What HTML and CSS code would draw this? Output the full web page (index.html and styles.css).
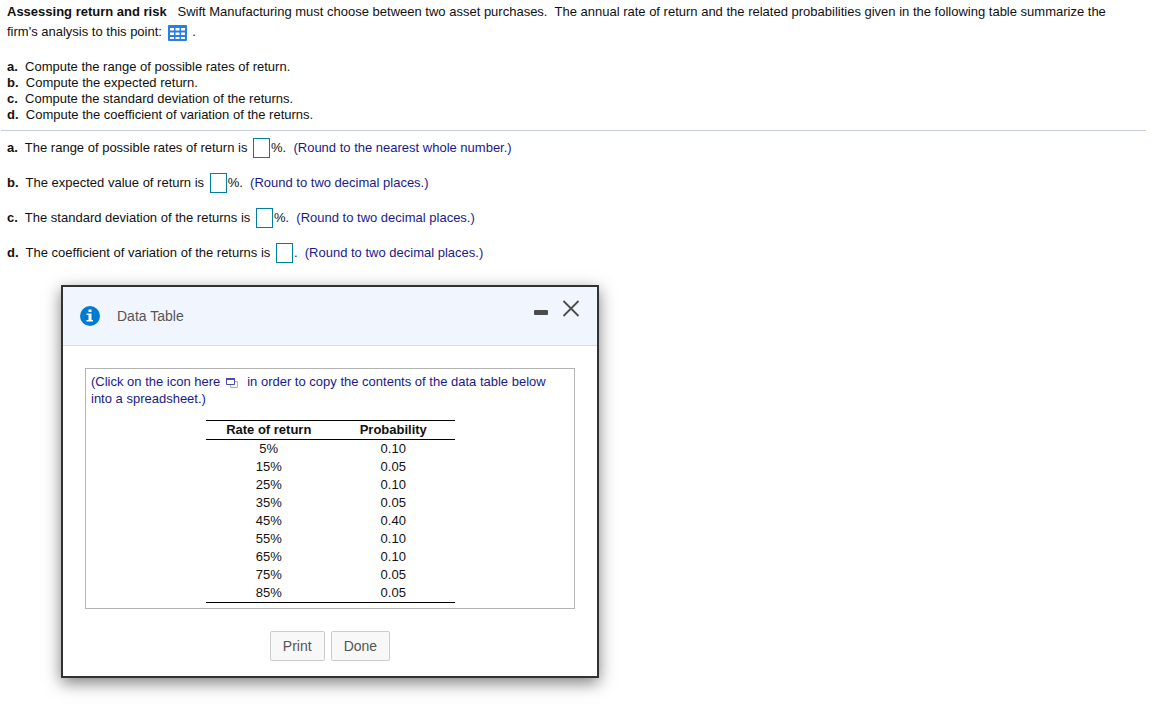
FILE: index.html
```html
<!DOCTYPE html>
<html lang="en">

<head>
    <meta charset="UTF-8">
    <meta name="viewport" content="width=device-width, initial-scale=1.0">
    <title>Assessing return and risk</title>
    <link rel="stylesheet" href="styles.css">
</head>

<body>
    <main class="exercise">
        <section class="question">
            <p class="intro"><b>Assessing return and risk</b> &nbsp; Swift Manufacturing must choose between two asset purchases.&nbsp; The annual rate of return and the related probabilities given in the following table summarize the firm's analysis to this point: <button class="table-btn" type="button" aria-label="Open data table"><svg width="19" height="16" viewBox="0 0 19 16">
                        <rect width="19" height="16" rx="1" fill="#2b7de0" />
                        <path fill="#fff" d="M2 3h4v2.500H2zM7.500 3h4v2.500h-4zM13 3h4v2.500h-4zM2 7.500h4v2.500H2zM7.500 7.500h4v2.500h-4zM13 7.500h4v2.500h-4zM2 12h4v2H2zM7.500 12h4v2h-4zM13 12h4v2h-4z" />
                    </svg></button> .</p>
            <ul class="parts">
                <li><b>a.</b>&nbsp; Compute the range of possible rates of return.</li>
                <li><b>b.</b>&nbsp; Compute the expected return.</li>
                <li><b>c.</b>&nbsp; Compute the standard deviation of the returns.</li>
                <li><b>d.</b>&nbsp; Compute the coefficient of variation of the returns.</li>
            </ul>
        </section>
        <form class="answers">
            <p><label for="range"><b>a.</b>&nbsp; The range of possible rates of return is</label> <input id="range" type="text">%.&nbsp; <span class="hint">(Round to the nearest whole number.)</span></p>
            <p><label for="expected"><b>b.</b>&nbsp; The expected value of return is</label> <input id="expected" type="text">%.&nbsp; <span class="hint">(Round to two decimal places.)</span></p>
            <p><label for="deviation"><b>c.</b>&nbsp; The standard deviation of the returns is</label> <input id="deviation" type="text">%.&nbsp; <span class="hint">(Round to two decimal places.)</span></p>
            <p><label for="variation"><b>d.</b>&nbsp; The coefficient of variation of the returns is</label> <input id="variation" type="text">.&nbsp; <span class="hint">(Round to two decimal places.)</span></p>
        </form>
    </main>

    <div class="dialog" role="dialog" aria-labelledby="dialog-title">
        <div class="dialog-header">
            <svg class="info" width="20" height="20" viewBox="0 0 20 20">
                <circle cx="10" cy="10" r="10" fill="#007bd1" />
                <path fill="#fff" d="M8.500 3.500h3v2.500h-3zM6.500 7.500h5v6.500h1.500v1.500H6.500V14h2V9h-2z" />
            </svg>
            <h2 id="dialog-title">Data Table</h2>
            <div class="window-btns">
                <button type="button" aria-label="Minimize"><svg width="14" height="18" viewBox="0 0 14 18">
                        <rect y="10" width="14" height="5" rx="1" fill="#4c4c4c" />
                    </svg></button>
                <button type="button" aria-label="Close"><svg width="18" height="18" viewBox="0 0 18 18">
                        <path d="M1.500 1l15 15M16.500 1l-15 15" stroke="#4c4c4c" stroke-width="1.800" />
                    </svg></button>
            </div>
        </div>
        <div class="dialog-body">
            <div class="sheet">
                <p class="copy-note">(Click on the icon here <button class="copy-btn" type="button" aria-label="Copy table"><svg width="12" height="10" viewBox="0 0 12 10">
                            <path d="M4.500 3.500h7v6h-7z" fill="#fff" stroke="#a9abd9" />
                            <path d="M.5 .5h8v6h-8z" fill="#fff" stroke="#4650a8" />
                            <path d="M0 0h9v2H0z" fill="#4650a8" />
                        </svg></button>&nbsp; in order to copy the contents of the data table below into a spreadsheet.)</p>
                <table>
                    <thead>
                        <tr><th>Rate of return</th><th>Probability</th></tr>
                    </thead>
                    <tbody>
                        <tr><td>5%</td><td>0.10</td></tr>
                        <tr><td>15%</td><td>0.05</td></tr>
                        <tr><td>25%</td><td>0.10</td></tr>
                        <tr><td>35%</td><td>0.05</td></tr>
                        <tr><td>45%</td><td>0.40</td></tr>
                        <tr><td>55%</td><td>0.10</td></tr>
                        <tr><td>65%</td><td>0.10</td></tr>
                        <tr><td>75%</td><td>0.05</td></tr>
                        <tr><td>85%</td><td>0.05</td></tr>
                    </tbody>
                </table>
            </div>
            <div class="actions">
                <button type="button">Print</button>
                <button type="button">Done</button>
            </div>
        </div>
    </div>
</body>

</html>
```
FILE: styles.css
```css
* {
    padding: 0;
    margin: 0;
    box-sizing: border-box;
}

body {
    font: 13px/16px "Liberation Sans", Arial, sans-serif;
    color: #111;
    background: #fff;
}

button {
    font-family: inherit;
    cursor: pointer;
}

.exercise {
    margin: 0 7px 0 1px;
}

.question {
    padding: 2px 6px 7px;
    border-bottom: 1px solid #c8cce0;
}

.intro {
    line-height: 20px;
}

.table-btn,
.copy-btn,
.window-btns button {
    border: none;
    background: none;
}

.table-btn {
    height: 16px;
    margin: 0 2px;
    vertical-align: middle;
}

.table-btn svg,
.window-btns svg,
.copy-btn svg {
    display: block;
}

.parts {
    list-style: none;
    margin-top: 17px;
}

.answers {
    display: flex;
    flex-direction: column;
    gap: 15px;
    padding: 7px 6px 0;
}

.answers p {
    height: 20px;
    line-height: 20px;
}

.answers input {
    width: 17px;
    height: 20px;
    margin: 0 1px 2px 2px;
    font: inherit;
    text-align: center;
    border: 1px solid #007fa3;
    vertical-align: middle;
}

.hint,
.copy-note {
    color: #1a1a8c;
}

.dialog {
    max-width: 538px;
    margin: 22px 0 34px 61px;
    background: #fff;
    border: 2px solid #303236;
    box-shadow: 0 5px 15px rgba(0, 0, 0, 0.5);
}

.dialog-header {
    display: flex;
    align-items: center;
    height: 59px;
    padding: 0 17px;
    background: #f1f6fe;
    border-bottom: 1px solid #cfdff0;
}

.dialog-header h2 {
    margin-left: 17px;
    font-size: 14px;
    font-weight: 400;
    color: #555;
}

.window-btns {
    display: flex;
    gap: 14px;
    align-self: flex-start;
    margin: 13px 0 0 auto;
}

.dialog-body {
    padding: 22px 22px 15px;
}

.sheet {
    padding: 4px 5px 5px;
    border: 1px solid #b4b4b4;
}

.copy-note {
    line-height: 17px;
}

.copy-btn {
    margin: 0 2px;
    vertical-align: middle;
}

table {
    width: 249px;
    margin: 13px auto 0;
    border-collapse: collapse;
    table-layout: fixed;
    border-top: 1px solid #000;
    border-bottom: 1px solid #000;
}

th,
td {
    height: 18px;
    padding-left: 2px;
    line-height: 18px;
    text-align: center;
}

thead {
    border-bottom: 1px solid #000;
}

.actions {
    display: flex;
    justify-content: center;
    gap: 6px;
    margin-top: 22px;
}

.actions button {
    height: 30px;
    padding: 0 12px;
    font-size: 14px;
    color: #555;
    background: #f8f8f8;
    border: 1px solid #ccc;
    border-radius: 2px;
}
```
